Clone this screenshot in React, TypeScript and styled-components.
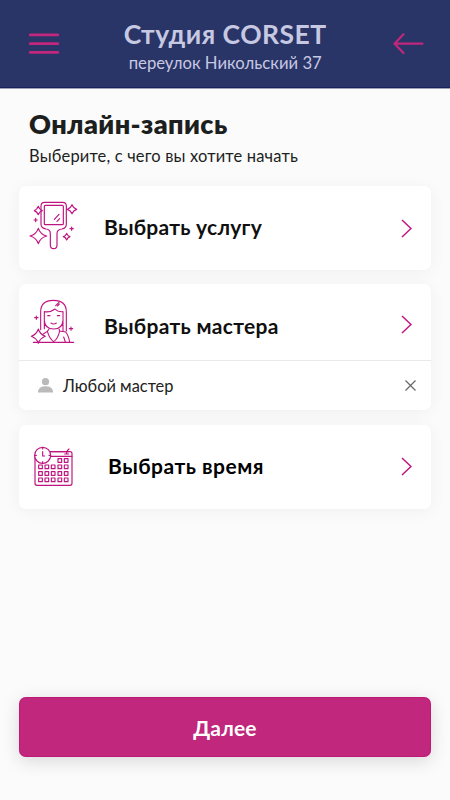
import React from 'react';
import styled, { createGlobalStyle } from 'styled-components';

const PINK = '#c0277d';
const ICON = '#bf1480';

const GlobalStyle = createGlobalStyle`
  * { box-sizing: border-box; }
  body { margin: 0; background: #fbfbfb; font-family: Lato, 'Open Sans', sans-serif; }
  button { font: inherit; border: 0; padding: 0; background: none; cursor: pointer; }
  svg { display: block; flex: none; }
`;

const Screen = styled.div`
  width: 450px;
  height: 800px;
  display: flex;
  flex-direction: column;
  overflow: hidden;
  background: #fbfbfb;
`;

const Header = styled.header`
  height: 88px;
  flex: none;
  display: flex;
  align-items: flex-start;
  justify-content: space-between;
  padding: 0 26px 0 29px;
  background: #293567;
  border-bottom: 1px solid #17225c;
  box-shadow: 0 1px 0 #9ea3b8;
`;

const IconButton = styled.button`
  margin-top: 32px;
`;

const Brand = styled.div`
  display: flex;
  flex-direction: column;
  align-items: center;
  padding: 18px 1.5px 0 0;
`;

const Line = styled.span<{ $size: number; $height: number; $weight?: number; $spacing?: number; $color?: string }>`
  display: block;
  white-space: nowrap;
  font-size: ${(p) => p.$size}px;
  line-height: ${(p) => p.$height}px;
  font-weight: ${(p) => p.$weight ?? 400};
  letter-spacing: ${(p) => p.$spacing ?? 0}px;
  color: ${(p) => p.$color ?? '#1d1f1e'};
`;

const Intro = styled.div`
  height: 98px;
  flex: none;
  padding: 19px 0 0 29px;
`;

const Cards = styled.main`
  flex: 1;
  display: flex;
  flex-direction: column;
  padding: 0 19px;
`;

const Card = styled.section<{ $gap: number }>`
  margin-bottom: ${(p) => p.$gap}px;
  border-radius: 7px;
  background: #fff;
  box-shadow: 0 2px 16px rgba(0, 0, 0, 0.05);
`;

const Choice = styled.div<{ $height: number; $pad: number }>`
  height: ${(p) => p.$height}px;
  display: flex;
  align-items: flex-start;
  padding: ${(p) => p.$pad}px 19px 0 1px;
`;

const Label = styled.div<{ $left: number; $top: number }>`
  flex: 1;
  padding: ${(p) => p.$top}px 0 0 ${(p) => p.$left}px;
`;

const Arrow = styled.div<{ $top: number }>`
  padding-top: ${(p) => p.$top}px;
`;

const Selected = styled.div`
  height: 50px;
  display: flex;
  align-items: center;
  gap: 10px;
  padding: 0 15px 0 19px;
  border-top: 1px solid #e9e9e9;
`;

const Remove = styled.button`
  margin-left: auto;
`;

const Footer = styled.footer`
  height: 103px;
  flex: none;
  padding: 0 19px;
`;

const Next = styled.button`
  width: 100%;
  height: 60px;
  display: flex;
  align-items: center;
  justify-content: center;
  padding-top: 2px;
  border-radius: 7px;
  background: ${PINK};
  box-shadow: 0 4px 18px rgba(0, 0, 0, 0.14), inset 0 0 0 1px rgba(190, 0, 110, 0.35);
`;

const Chevron = () => (
  <svg width="11" height="19" viewBox="0 0 11 19" fill="none" stroke={ICON} strokeWidth="1.5">
    <path d="M1 1L10 9.5L1 18" />
  </svg>
);

const Mirror = () => (
  <svg width="65" height="60" viewBox="0 0 195 180" fill="none" stroke={ICON} strokeWidth="3.5" strokeLinejoin="round" strokeLinecap="round">
    <path d="M74 22H128Q139 22 139 33V88Q139 100 126 102Q111 103 111 116V150Q111 161 101 161Q91 161 91 150V116Q91 103 78 102Q63 100 63 88V33Q63 22 74 22Z" />
    <rect x="73" y="31" width="57" height="58" rx="3" />
    <path d="M103 73L117 58M111 79L119 71" />
    <path d="M55 34Q58 44 67 47Q58 50 55 59Q51 50 43 47Q51 44 55 34Z" />
    <path d="M156 29Q160 40 170 43Q160 46 156 56Q152 46 142 43Q152 40 156 29Z" />
    <path d="M55 100Q61 118 80 123Q61 128 55 146Q49 128 30 123Q49 118 55 100Z" />
    <path d="M140 115Q143 123 150 125Q143 127 140 135Q137 127 130 125Q137 123 140 115Z" />
    <path d="M47 70V80M42 75H52M155 96V106M150 101H160" />
  </svg>
);

const Stylist = () => (
  <svg width="65" height="60" viewBox="0 0 195 180" fill="none" stroke={ICON} strokeWidth="3.3" strokeLinejoin="round" strokeLinecap="round">
    <path d="M62 119V66Q62 31 100 31Q139 31 139 66V123" />
    <path d="M73 65V91Q75 117 101 117Q127 117 129 91V65Q113 66 105 57Q91 68 73 65ZM73 91V116M129 91V122" />
    <path d="M83 77H90M112 77H119M93 99Q101 105 109 99M107 47L117 37M112 48L118 42" />
    <path d="M87 117L82 124L70 132M117 117L119 123L137 126Q145 135 149 156M82 124Q89 147 101 155Q114 146 119 123M131 141L136 156" />
    <path d="M55 117Q60 133 76 139Q60 145 55 160Q50 145 34 139Q50 133 55 117Z" fill="#fff" />
    <path d="M40 157H161M49 78V88M44 83H54M153 111V121M148 116H158" />
  </svg>
);

const DAYS = [
  [114, 71], [133, 71],
  ...[90, 110, 129].flatMap((y) => [56, 75, 94, 114, 133].map((x) => [x, y])),
];

const CalendarClock = () => (
  <svg width="65" height="60" viewBox="0 0 195 180" fill="none" stroke={ICON} strokeWidth="3.5" strokeLinejoin="round" strokeLinecap="round">
    <path d="M88 50H150Q156 50 156 56V145Q156 151 150 151H51Q45 151 45 145V61" />
    <path d="M88 50H145M92 64H156M134 57H146M140 56V49L147 42" />
    {DAYS.map(([x, y]) => (
      <rect key={`${x}-${y}`} x={x} y={y} width="11" height="11" />
    ))}
    <circle cx="68" cy="61" r="24" fill="#fff" />
    <path d="M68 50V63H74M68 37V42M68 80V85M44 61H49M87 61H92" />
  </svg>
);

export default function App() {
  return (
    <Screen>
      <GlobalStyle />
      <Header>
        <IconButton aria-label="Меню">
          <svg width="30" height="24" viewBox="0 0 30 24" stroke={PINK} strokeWidth="2.8" strokeLinecap="round">
            <path d="M1.2 2.8H28.8M1.2 11.6H28.8M1.2 20.4H28.8" />
          </svg>
        </IconButton>
        <Brand>
          <Line $size={26.5} $height={33} $weight={700} $spacing={0.5} $color="#c7c8e2">Студия CORSET</Line>
          <Line $size={16.7} $height={24} $spacing={0} $color="#c7c8e2">переулок Никольский 37</Line>
        </Brand>
        <IconButton aria-label="Назад">
          <svg width="31" height="24" viewBox="0 0 31 24" fill="none" stroke={PINK} strokeWidth="2.2" strokeLinecap="round">
            <path d="M10.5 2.3L1.5 11.7L10.5 21M1.5 11.7H29.5" />
          </svg>
        </IconButton>
      </Header>

      <Intro>
        <Line $size={27} $height={34} $weight={800} $spacing={0.4}>Онлайн-запись</Line>
        <Line $size={16.5} $height={30} $spacing={0.16}>Выберите, с чего вы хотите начать</Line>
      </Intro>

      <Cards>
        <Card $gap={14}>
          <Choice $height={84} $pad={9}>
            <Mirror />
            <Label $left={19} $top={17}><Line $size={21} $height={30} $weight={700} $spacing={0.25} $color="#101010">Выбрать услугу</Line></Label>
            <Arrow $top={24}><Chevron /></Arrow>
          </Choice>
        </Card>
        <Card $gap={15}>
          <Choice $height={76} $pad={6}>
            <Stylist />
            <Label $left={19} $top={21}><Line $size={21} $height={30} $weight={700} $spacing={0.3} $color="#101010">Выбрать мастера</Line></Label>
            <Arrow $top={25}><Chevron /></Arrow>
          </Choice>
          <Selected>
            <svg width="15" height="15" viewBox="0 0 15 15" fill="#bababa">
              <circle cx="7.5" cy="3.7" r="3.6" />
              <path d="M0 14.5V13Q1 8.2 7.5 8.2Q14 8.2 15 13V14.5Z" />
            </svg>
            <Line $size={16.4} $height={24} $color="#222">Любой мастер</Line>
            <Remove aria-label="Убрать мастера">
              <svg width="11" height="11" viewBox="0 0 11 11" stroke="#666" strokeWidth="1.2">
                <path d="M.5 .5L10.5 10.5M10.5 .5L.5 10.5" />
              </svg>
            </Remove>
          </Selected>
        </Card>
        <Card $gap={0}>
          <Choice $height={84} $pad={10}>
            <CalendarClock />
            <Label $left={23} $top={16}><Line $size={21} $height={30} $weight={700} $spacing={0.5} $color="#000">Выбрать время</Line></Label>
            <Arrow $top={22}><Chevron /></Arrow>
          </Choice>
        </Card>
      </Cards>

      <Footer>
        <Next><Line $size={21} $height={30} $weight={700} $spacing={0.2} $color="#fff">Далее</Line></Next>
      </Footer>
    </Screen>
  );
}
